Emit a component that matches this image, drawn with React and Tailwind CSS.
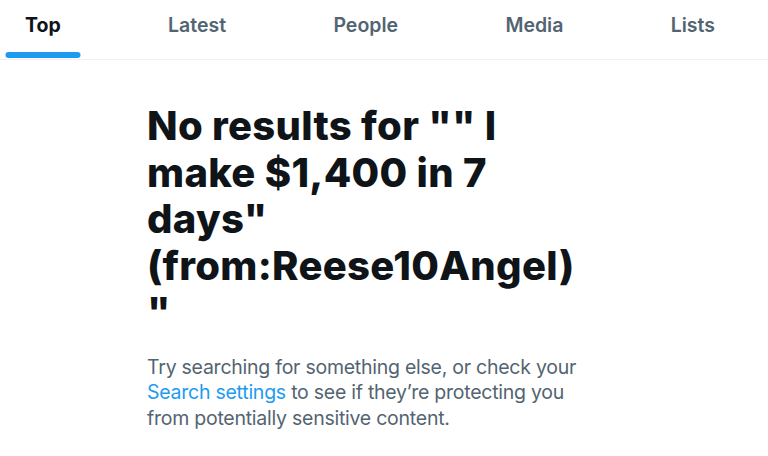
export default function App() {
  const tabs = ["Top", "Latest", "People", "Media", "Lists"];
  return (
    <div className="w-[768px] h-[456px] bg-white overflow-hidden" style={{ fontFamily: "Inter, 'Noto Sans', sans-serif" }}>
      <div className="flex justify-between h-[60px] border-b border-[#eff3f4] pl-[25px] pr-[53px]">
        {tabs.map((t, i) => (
          <div key={t} className="relative h-full pt-[13px]">
            <span
              className={
                i === 0
                  ? "block text-[19.5px] leading-[24px] font-bold text-[#0f1419]"
                  : "block text-[19.5px] leading-[24px] font-semibold text-[#536471]"
              }
            >
              {t}
            </span>
            {i === 0 && (
              <div className="absolute bottom-[1px] left-1/2 -translate-x-1/2 w-[75px] h-[6px] rounded-full bg-[#1d9bf0]" />
            )}
          </div>
        ))}
      </div>
      <div className="ml-[147px] w-[437px] pt-[43px]">
        <h1 className="text-[40px] leading-[46.5px] font-extrabold text-[#0f1419] tracking-[0.3px]">
          No results for "" I make $1,400 in 7 days" (from:Reese10Angel) "
        </h1>
        <p className="mt-[19px] text-[19.5px] leading-[25.5px] text-[#536471] tracking-[-0.25px]">
          Try searching for something else, or check your <span className="text-[#1d9bf0]">Search settings</span> to see if they’re protecting you from potentially sensitive content.
        </p>
      </div>
    </div>
  );
}
